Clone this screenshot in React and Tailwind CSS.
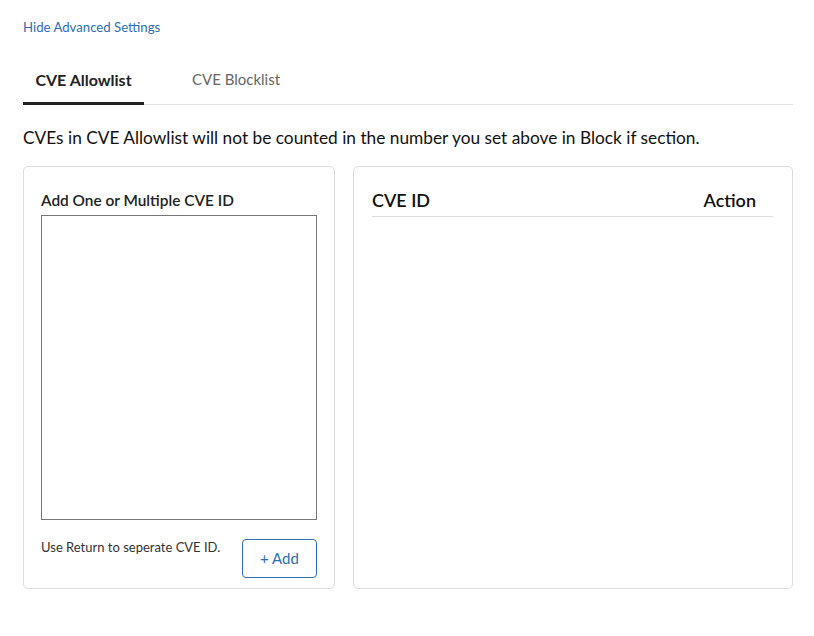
export default function App() {
  return (
    <div className="min-h-screen bg-white font-['Lato','Open_Sans',sans-serif] text-[#1a1a1a]">
      <div className="w-[770px] ml-[23px] pt-[18px]">
        <a href="#" className="block text-[13.2px] leading-[18px] text-[#2d6fb0]">
          Hide Advanced Settings
        </a>

        {/* Tabs */}
        <div className="mt-[19px] flex border-b border-[#e3e3e3]">
          <button className="relative w-[121px] h-[49px] text-[16px] font-bold text-[#222]">
            CVE Allowlist
            <span className="absolute left-0 right-0 -bottom-px h-[3px] bg-[#222]" />
          </button>
          <button className="h-[49px] pl-[48px] text-[15px] text-[#666]">
            CVE Blocklist
          </button>
        </div>

        <p className="mt-[21px] text-[17.3px] leading-[24px] text-[#111]">
          CVEs in CVE Allowlist will not be counted in the number you set above in Block if section.
        </p>

        <div className="mt-[16px] flex gap-[18px]">
          {/* Left card */}
          <div className="w-[312px] h-[423px] rounded-[5px] border border-[#dcdcdc] px-[17px] pt-[23px]">
            <label className="block text-[15.4px] leading-[20px] font-semibold text-[#222]">
              Add One or Multiple CVE ID
            </label>
            <textarea className="mt-[5px] block w-[276px] h-[305px] border border-[#777] resize-none outline-none" />
            <div className="mt-[19px] flex justify-between items-start">
              <span className="text-[13px] leading-[16px] text-[#333]">
                Use Return to seperate CVE ID.
              </span>
              <button className="w-[75px] h-[39px] rounded-[4px] border border-[#2d6fb0] text-[15px] text-[#2d6fb0]">
                + Add
              </button>
            </div>
          </div>

          {/* Right card */}
          <div className="w-[440px] h-[423px] rounded-[5px] border border-[#dcdcdc] pl-[18px] pr-[19px] pt-[21px]">
            <div className="flex justify-between items-center h-[29px] border-b border-[#dcdcdc] pb-[4px] text-[18px] font-semibold text-[#111]">
              <span>CVE ID</span>
              <span className="mr-[17px]">Action</span>
            </div>
          </div>
        </div>
      </div>
    </div>
  );
}
